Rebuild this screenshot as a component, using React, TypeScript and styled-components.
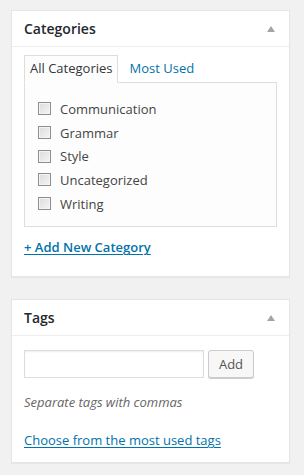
import React from "react";
import styled, { createGlobalStyle } from "styled-components";

const Global = createGlobalStyle`
  html, body { margin: 0; padding: 0; background: #f1f1f1; }
  body { font-family: "Open Sans", "Liberation Sans", sans-serif; font-size: 13px; color: #444; }
  * { box-sizing: border-box; }
`;

const Page = styled.div`
  display: flex;
  flex-direction: column;
  gap: 22px;
  padding: 10px 14px 12px 11px;
`;

const Box = styled.div`
  background: #fff;
  border: 1px solid #e5e5e5;
  box-shadow: 0 1px 1px rgba(0, 0, 0, 0.04);
`;

const Header = styled.div`
  display: flex;
  align-items: center;
  justify-content: space-between;
  height: 36px;
  padding: 0 12px;
  border-bottom: 1px solid #eee;
`;

const Title = styled.h2`
  margin: 0;
  font-size: 14px;
  font-weight: 600;
  line-height: 20px;
  color: #23282d;
`;

const Toggle = styled.span`
  width: 0;
  height: 0;
  margin-right: 2px;
  border-left: 4px solid transparent;
  border-right: 4px solid transparent;
  border-bottom: 6px solid #a0a5aa;
`;

const Inside = styled.div<{ $pt: number; $pb: number }>`
  padding: ${(p) => p.$pt}px 12px ${(p) => p.$pb}px;
`;

const Tabs = styled.ul`
  display: flex;
  margin: 0;
  padding: 0;
  list-style: none;
  position: relative;
  z-index: 1;
  margin-bottom: -1px;
`;

const Tab = styled.li<{ $active?: boolean }>`
  padding: 4px 5px 5px;
  line-height: 17px;
  font-size: 13px;
  border: 1px solid ${(p) => (p.$active ? "#ddd" : "transparent")};
  border-bottom-color: ${(p) => (p.$active ? "#fdfdfd" : "transparent")};
  background: ${(p) => (p.$active ? "#fdfdfd" : "transparent")};
  color: ${(p) => (p.$active ? "#32373c" : "#0073aa")};
  margin-right: 5px;
`;

const Panel = styled.div`
  border: 1px solid #ddd;
  background: #fdfdfd;
  padding: 14px 13px 11px;
`;

const List = styled.ul`
  margin: 0;
  padding: 0;
  list-style: none;
`;

const Row = styled.li`
  display: flex;
  align-items: center;
  gap: 9px;
  height: 23.7px;
  color: #444;
`;

const Check = styled.input`
  appearance: none;
  margin: 0;
  width: 13px;
  height: 13px;
  border: 1px solid #8e8e8e;
  background: linear-gradient(135deg, #dcdcdc 0%, #f4f4f4 100%);
  box-shadow: inset 0 0 0 1px #f4f4f4;
  flex: none;
`;

const AddLink = styled.a`
  display: inline-block;
  margin-top: 10px;
  line-height: 20px;
  font-weight: 600;
  color: #0073aa;
  text-decoration: underline;
  text-underline-offset: 2px;
`;

const TagRow = styled.div`
  display: flex;
  gap: 4px;
`;

const TagInput = styled.input`
  width: 180px;
  height: 28px;
  margin: 0;
  border: 1px solid #ddd;
  box-shadow: inset 0 1px 2px rgba(0, 0, 0, 0.07);
  background: #fff;
`;

const Button = styled.button`
  width: 46px;
  height: 28px;
  padding: 0;
  border: 1px solid #ccc;
  border-radius: 3px;
  background: #f7f7f7;
  box-shadow: 0 1px 0 #ccc;
  font-family: inherit;
  font-size: 13px;
  color: #555;
`;

const Hint = styled.p`
  margin: 15px 0 0;
  line-height: 18px;
  font-style: italic;
  color: #666;
`;

const MostUsed = styled.a`
  display: inline-block;
  margin-top: 20px;
  line-height: 18px;
  color: #0073aa;
  text-decoration: underline;
  text-underline-offset: 2px;
`;

const categories = ["Communication", "Grammar", "Style", "Uncategorized", "Writing"];

export default function App() {
  return (
    <>
      <Global />
      <Page>
        <Box>
          <Header>
            <Title>Categories</Title>
            <Toggle />
          </Header>
          <Inside $pt={8} $pb={19}>
            <Tabs>
              <Tab $active>All Categories</Tab>
              <Tab>Most Used</Tab>
            </Tabs>
            <Panel>
              <List>
                {categories.map((c) => (
                  <Row key={c}>
                    <Check type="checkbox" />
                    {c}
                  </Row>
                ))}
              </List>
            </Panel>
            <AddLink href="#">+ Add New Category</AddLink>
          </Inside>
        </Box>
        <Box>
          <Header>
            <Title>Tags</Title>
            <Toggle />
          </Header>
          <Inside $pt={14} $pb={13}>
            <TagRow>
              <TagInput type="text" />
              <Button>Add</Button>
            </TagRow>
            <Hint>Separate tags with commas</Hint>
            <MostUsed href="#">Choose from the most used tags</MostUsed>
          </Inside>
        </Box>
      </Page>
    </>
  );
}
